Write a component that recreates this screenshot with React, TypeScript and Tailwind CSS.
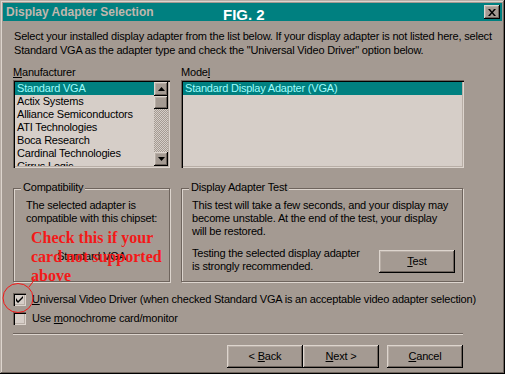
import React from 'react'

const raised =
  'shadow-[inset_-1px_-1px_#000,inset_1px_1px_#ddd5ce,inset_-2px_-2px_#6e645d,inset_2px_2px_#b8aea6]'
const sunken =
  'shadow-[inset_1px_1px_#6e645d,inset_2px_2px_#000,inset_-1px_-1px_#ddd5ce,inset_-2px_-2px_#b8aea6]'

const manufacturers = [
  'Standard VGA',
  'Actix Systems',
  'Alliance Semiconductors',
  'ATI Technologies',
  'Boca Research',
  'Cardinal Technologies',
  'Cirrus Logic',
]

function Arrow({ down }: { down?: boolean }) {
  return (
    <div className={`h-[14px] w-[14px] bg-[#a49a92] flex items-center justify-center ${raised}`}>
      <svg width="7" height="4" viewBox="0 0 7 4">
        <path d={down ? 'M0 0h7L3.5 4z' : 'M0 4h7L3.5 0z'} fill="#000" />
      </svg>
    </div>
  )
}

function GroupBox({
  title,
  className,
  children,
}: {
  title: string
  className?: string
  children: React.ReactNode
}) {
  return (
    <div
      className={`relative border border-[#6e645d] shadow-[1px_1px_#ddd5ce,inset_1px_1px_#ddd5ce] ${className ?? ''}`}
    >
      <span className="absolute left-[7px] top-[-8px] bg-[#a49a92] px-[2px] leading-[13px]">{title}</span>
      {children}
    </div>
  )
}

function Checkbox({ checked, children }: { checked?: boolean; children: React.ReactNode }) {
  return (
    <div className="flex items-center gap-[6px] h-[19px]">
      <div className={`w-[13px] h-[13px] bg-[#d6cec8] flex items-center justify-center ${sunken}`}>
        {checked && (
          <svg width="7" height="7" viewBox="0 0 7 7">
            <path d="M0 2v3l2 2 5-5V-0L2 5z" fill="#000" />
          </svg>
        )}
      </div>
      <span className="leading-[13px]">{children}</span>
    </div>
  )
}

function Btn({ children, className }: { children: React.ReactNode; className?: string }) {
  return (
    <div className={`w-[76px] h-[23px] bg-[#a49a92] flex items-center justify-center ${raised} ${className ?? ''}`}>
      {children}
    </div>
  )
}

export default function App() {
  return (
    <div className="relative w-[505px] h-[374px] bg-[#a49a92] p-[3px] text-[11px] text-black font-['Liberation_Sans',Arial,sans-serif] tracking-[-0.2px] shadow-[inset_-1px_-1px_#000,inset_1px_1px_#b8aea6,inset_-2px_-2px_#6e645d,inset_2px_2px_#ddd5ce] overflow-hidden">
      {/* title bar */}
      <div className="relative h-[18px] bg-[#008080] flex items-center">
        <span className="pl-[3px] text-[12px] font-bold text-[#c2b7ae] tracking-normal">Display Adapter Selection</span>
        <span className="absolute left-[220px] top-[1px] text-[15px] font-bold text-white tracking-normal">FIG. 2</span>
        <div className={`ml-auto mr-[2px] w-[16px] h-[14px] bg-[#a49a92] flex items-center justify-center ${raised}`}>
          <svg width="8" height="7" viewBox="0 0 8 7">
            <path d="M0 0h2l2 2.5L6 0h2L5 3.5 8 7H6L4 4.5 2 7H0l3-3.5z" fill="#000" />
          </svg>
        </div>
      </div>

      <div className="px-[10px]">
        <p className="mt-[8px] pl-[1px] leading-[14px]">
          Select your installed display adapter from the list below. If your display adapter is not listed here, select
          Standard VGA as the adapter type and check the &quot;Universal Video Driver&quot; option below.
        </p>

        {/* lists */}
        <div className="flex gap-[11px] mt-[9px]">
          <div className="w-[157px]">
            <div className="leading-[13px] mb-[1px]">
              <u>M</u>anufacturer
            </div>
            <div className={`h-[88px] bg-[#d6cec8] p-[2px] flex ${sunken}`}>
              <div className="flex-1 overflow-hidden">
                {manufacturers.map((m, i) => (
                  <div
                    key={m}
                    className={`h-[13px] leading-[13px] pl-[2px] whitespace-nowrap ${i === 0 ? 'bg-[#008080] text-[#9ffcfc]' : ''}`}
                  >
                    {m}
                  </div>
                ))}
              </div>
              <div className="w-[14px] flex flex-col">
                <Arrow />
                <div className={`h-[13px] bg-[#a49a92] ${raised}`} />
                <div className="flex-1 bg-[repeating-conic-gradient(#d6cec8_0%_25%,#a49a92_0%_50%)] bg-[length:2px_2px]" />
                <Arrow down />
              </div>
            </div>
          </div>
          <div className="w-[283px]">
            <div className="leading-[13px] mb-[1px]">
              Mode<u>l</u>
            </div>
            <div className={`h-[88px] bg-[#d6cec8] p-[2px] ${sunken}`}>
              <div className="h-[13px] leading-[13px] pl-[2px] bg-[#008080] text-[#9ffcfc]">
                Standard Display Adapter (VGA)
              </div>
            </div>
          </div>
        </div>

        {/* groups */}
        <div className="flex gap-[11px] mt-[20px]">
          <GroupBox title="Compatibility" className="w-[157px] h-[94px]">
            <p className="pl-[12px] pt-[10px] leading-[13px]">
              The selected adapter is compatible with this chipset:
            </p>
            <p className="text-center mt-[25px] leading-[13px]">Standard VGA</p>
          </GroupBox>
          <GroupBox title="Display Adapter Test" className="w-[282px] h-[94px]">
            <p className="pl-[10px] pt-[10px] leading-[13px] whitespace-nowrap">
              This test will take a few seconds, and your display may
              <br />
              become unstable. At the end of the test, your display
              <br />
              will be restored.
            </p>
            <div className="flex items-end pl-[10px] pr-[7px] mt-[9px]">
              <p className="leading-[13px] flex-1">
                Testing the selected display adapter
                <br />
                is strongly recommended.
              </p>
              <Btn>
                <span>
                  <u>T</u>est
                </span>
              </Btn>
            </div>
          </GroupBox>
        </div>

        {/* checkboxes */}
        <div className="mt-[8px]">
          <Checkbox checked>
            <u>U</u>niversal Video Driver (when checked Standard VGA is an acceptable video adapter selection)
          </Checkbox>
          <Checkbox>
            Use <u>m</u>onochrome card/monitor
          </Checkbox>
        </div>

        <div className="mt-[5px] h-[2px] w-[450px] border-t border-[#6e645d] border-b border-b-[#ddd5ce]" />

        <div className="flex mt-[10px] w-[450px] justify-end">
          <Btn>
            <span>
              &lt; <u>B</u>ack
            </span>
          </Btn>
          <Btn>
            <span>
              <u>N</u>ext &gt;
            </span>
          </Btn>
          <Btn className="ml-[8px]">
            <span>
              <u>C</u>ancel
            </span>
          </Btn>
        </div>
      </div>

      {/* red annotation */}
      <div className="absolute left-[31px] top-[228px] text-[16px] leading-[19px] font-bold text-[#f41818] font-['Liberation_Serif','Times_New_Roman',serif] tracking-normal">
        Check this if your
        <br />
        card not supported
        <br />
        above
      </div>
      <svg className="absolute left-0 top-[276px]" width="45" height="45" viewBox="0 0 45 45">
        <ellipse cx="18" cy="22" rx="15" ry="14.5" fill="none" stroke="#f41818" strokeWidth="1" />
        <path d="M29 11L35 3" stroke="#f41818" strokeWidth="1" />
      </svg>
    </div>
  )
}
